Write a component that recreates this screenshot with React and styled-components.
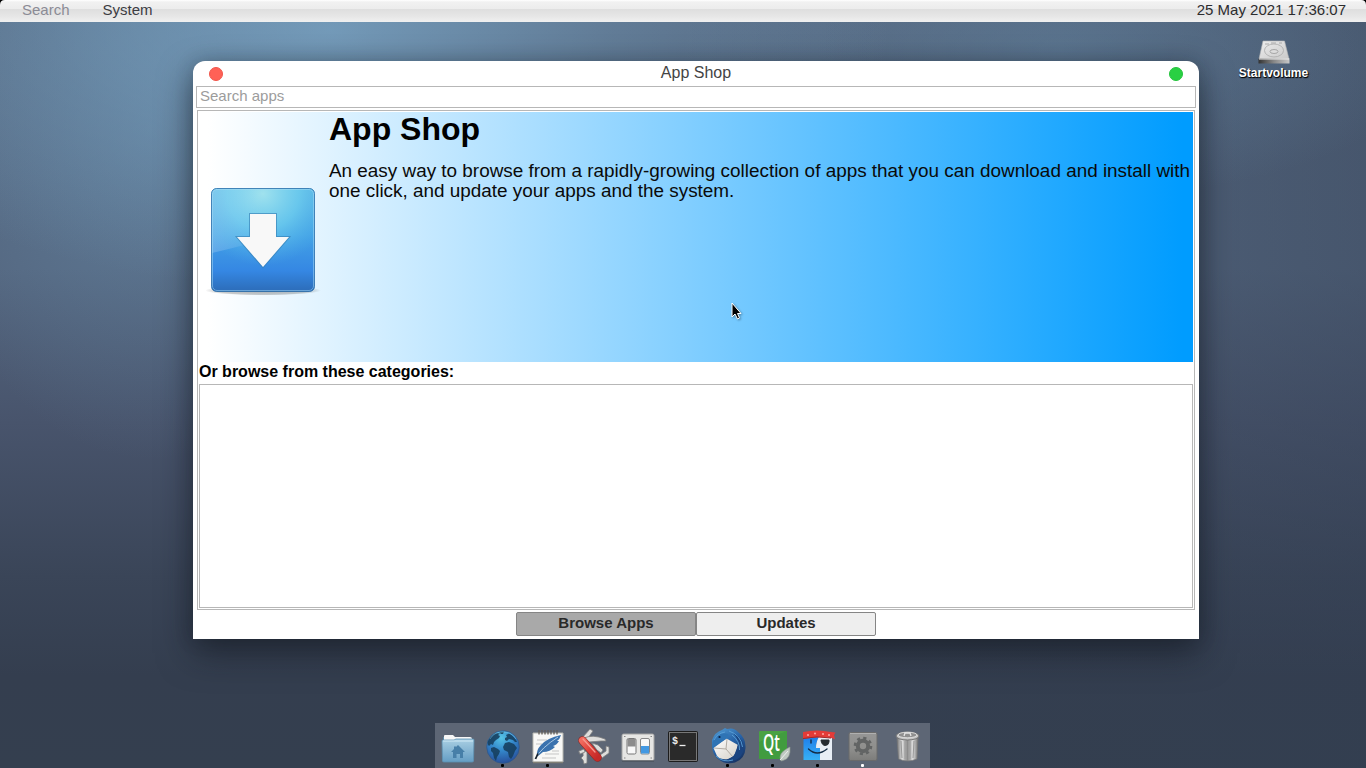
import React from 'react';
import styled, { createGlobalStyle } from 'styled-components';

const Global = createGlobalStyle`
  * { box-sizing: border-box; }
  body { margin: 0; background: #000; font-family: "Liberation Sans", Arial, sans-serif; overflow: hidden; }
  h1, h2, p { margin: 0; }
`;

const Desktop = styled.div`
  position: relative;
  width: 1366px;
  height: 768px;
  display: flex;
  flex-direction: column;
  align-items: stretch;
  overflow: hidden;
  background:
    radial-gradient(ellipse 560px 260px at 330px 30px, rgba(126,172,205,.72), rgba(126,172,205,.3) 50%, rgba(126,172,205,0) 100%),
    radial-gradient(ellipse 230px 330px at 150px 130px, rgba(108,150,182,.42), rgba(108,150,182,0) 100%),
    radial-gradient(ellipse 380px 150px at 1060px 50px, rgba(104,140,170,.45), rgba(104,140,170,0) 100%),
    linear-gradient(90deg, rgba(50,62,82,0) 60%, rgba(50,62,82,.4) 100%),
    linear-gradient(180deg, #55677f 0%, #54667f 35%, #48546c 55%, #3a4558 75%, #343e4f 88%, #343f4f 100%);
`;

const MenuBar = styled.header`
  height: 22px;
  flex: none;
  display: flex;
  align-items: center;
  gap: 33px;
  padding: 0 20px 2px 22px;
  font-size: 15px;
  line-height: 20px;
  color: #3c3c40;
  background: linear-gradient(180deg, #fff 0, #f1f1f1 2px, #ececec 9px, #dedede 9px, #e6e6e6 16px, #f0f0f0 22px);
`;
const MenuItem = styled.span`
  color: ${p => (p.$muted ? '#8b8b95' : '#3c3c42')};
`;
const Clock = styled.time`
  margin-left: auto;
  color: #2c2c2e;
`;
const ScreenCorner = styled.svg`
  position: absolute;
  top: 0;
  ${p => (p.$right ? 'right: 0; transform: scaleX(-1);' : 'left: 0;')}
`;

const Stage = styled.main`
  flex: 1;
  display: flex;
  align-items: flex-start;
  padding-left: 193px;
`;
const Window = styled.section`
  width: 1006px;
  height: 578px;
  margin-top: 39px;
  display: flex;
  flex-direction: column;
  background: #fff;
  border-radius: 12px 12px 0 0;
  box-shadow: 0 14px 34px rgba(14,18,26,.55), 0 0 18px rgba(20,30,40,.22);
`;
const TitleBar = styled.div`
  height: 25px;
  flex: none;
  display: flex;
  align-items: center;
  justify-content: space-between;
  padding: 0 16px;
  font-size: 16px;
  color: #444;
`;
const Title = styled.span`
  line-height: 18px;
  margin-top: -2px;
`;
const Light = styled.span`
  width: 14px;
  height: 14px;
  margin-top: 1px;
  border-radius: 50%;
  background: ${p => p.$color};
  border: 1px solid ${p => p.$edge};
`;
const SearchField = styled.input`
  flex: none;
  height: 22px;
  margin: 0 3px;
  padding: 0 3px 3px;
  border: 1px solid #b7b7b7;
  border-radius: 0;
  background: #fff;
  font: 15px "Liberation Sans", Arial, sans-serif;
  &::placeholder { color: #9c9c9c; opacity: 1; }
`;
const Panel = styled.div`
  flex: none;
  height: 500px;
  margin: 2px 4px 0;
  padding: 1px 1px 1px;
  border: 1px solid #b7b7b7;
  display: flex;
  flex-direction: column;
`;
const Banner = styled.div`
  height: 250px;
  flex: none;
  margin: 0 0 0 -1px;
  display: flex;
  align-items: flex-start;
  background: linear-gradient(90deg, #fff 0, #fff 1%, #009cff 99%);
  color: #0a0a0a;
`;
const BannerIcon = styled.div`
  width: 131px;
  flex: none;
  padding: 74px 0 0 8px;
  svg { display: block; }
`;
const BannerText = styled.div`
  flex: 1;
  white-space: nowrap;
`;
const BannerTitle = styled.h1`
  font-size: 32px;
  line-height: 34px;
  color: #000;
`;
const BannerCopy = styled.p`
  margin-top: 15px;
  font-size: 18.9px;
  line-height: 20px;
`;
const SectionTitle = styled.h2`
  height: 22px;
  font-size: 16px;
  line-height: 19px;
  color: #000;
`;
const CategoryList = styled.div`
  flex: 1;
  border: 1px solid #b7b7b7;
  background: #fff;
`;
const Tabs = styled.nav`
  display: flex;
  justify-content: center;
  padding-top: 2px;
`;
const Tab = styled.button`
  width: 180px;
  height: 24px;
  padding: 0 0 3px;
  border: 1px solid #858585;
  border-radius: 2px;
  background: ${p => (p.$active ? '#a9a9a9' : '#eee')};
  color: #292929;
  font: bold 15px "Liberation Sans", Arial, sans-serif;
`;

const Shelf = styled.aside`
  flex: 1;
  padding: 17px 18px 0 0;
  display: flex;
  flex-direction: column;
  align-items: center;
`;
const VolumeName = styled.span`
  font-size: 12px;
  font-weight: bold;
  line-height: 14px;
  margin-top: 1px;
  color: #fff;
  text-shadow: 1px 1px 1px #000, 0 1px 1px rgba(0,0,0,.6);
`;

const Dock = styled.footer`
  flex: none;
  align-self: flex-start;
  width: 495px;
  height: 45px;
  margin-left: 435px;
  display: flex;
  background: #5d6675;
`;
const DockItem = styled.div`
  position: relative;
  width: 45px;
  height: 45px;
  display: flex;
  justify-content: center;
  padding: 7px 1px 0 2px;
  svg { flex: none; overflow: visible; }
`;
const RunningDot = styled.i`
  position: absolute;
  left: 21px;
  bottom: 1px;
  width: 3px;
  height: 3px;
  border-radius: 1px;
  background: ${p => p.$color};
`;
const Pointer = styled.svg`
  position: absolute;
  left: 729px;
  top: 301px;
  filter: drop-shadow(1px 1px 1px rgba(0,0,0,.35));
`;

const DownloadIcon = () => (
  <svg width="116" height="112" viewBox="0 0 116 112">
    <defs>
      <linearGradient id="dl" x1="0" y1="0" x2="0" y2="1">
        <stop offset="0" stopColor="#5cb5e4" /><stop offset=".45" stopColor="#43a2e6" />
        <stop offset=".8" stopColor="#3587e3" /><stop offset="1" stopColor="#2c6cb8" />
      </linearGradient>
      <radialGradient id="dlGlow" cx=".5" cy=".05" r=".7">
        <stop offset="0" stopColor="#a0e2ee" /><stop offset=".5" stopColor="#6fcfef" stopOpacity=".75" />
        <stop offset="1" stopColor="#4fb2ea" stopOpacity="0" />
      </radialGradient>
      <radialGradient id="dlShade"><stop offset="0" stopColor="#000" stopOpacity=".3" /><stop offset=".8" stopColor="#000" stopOpacity=".2" /><stop offset="1" stopColor="#000" stopOpacity="0" /></radialGradient>
      <linearGradient id="dlGloss" x1="0" y1="0" x2="1" y2="0"><stop offset="0" stopColor="#fff" stopOpacity=".2" /><stop offset=".5" stopColor="#fff" stopOpacity="0" /></linearGradient>
    </defs>
    <ellipse cx="57" cy="104.500" rx="58" ry="5" fill="url(#dlShade)" />
    <rect x="5.500" y="2.500" width="103" height="103" rx="5" fill="url(#dl)" />
    <rect x="5.500" y="2.500" width="103" height="103" rx="5" fill="url(#dlGlow)" />
    <path d="M6 7Q6 3 10 3H104Q108 3 108 7V38Q60 54 6 67Z" fill="url(#dlGloss)" />
    <rect x="6.500" y="3.500" width="101" height="101" rx="4.500" fill="none" stroke="#a8dcf5" strokeOpacity=".5" />
    <rect x="5.500" y="2.500" width="103" height="103" rx="5" fill="none" stroke="#2468a5" strokeOpacity=".75" />
    <path d="M44 28H70V51H83L57 81L31 51H44Z" fill="#f8f8f8" stroke="#3580b5" strokeOpacity=".65" strokeWidth="2" paintOrder="stroke" />
  </svg>
);

const DriveIcon = () => (
  <svg width="34" height="26" viewBox="0 0 34 26">
    <defs>
      <linearGradient id="hd" x1="0" y1="0" x2="1" y2="1"><stop offset="0" stopColor="#eee" /><stop offset="1" stopColor="#c9c9c9" /></linearGradient>
      <linearGradient id="hdFront"><stop offset="0" stopColor="#333" /><stop offset=".5" stopColor="#888" /><stop offset="1" stopColor="#c8c8c8" /></linearGradient>
    </defs>
    <path d="M6 2H27.500L32 20H2Z" fill="url(#hd)" stroke="#b5b5b5" strokeWidth=".6" />
    <path d="M1.500 19.500H32.500V24.500H1.500Z" fill="url(#hdFront)" />
    <path d="M2 20H32" stroke="#eee" />
    <ellipse cx="17" cy="11.500" rx="9.500" ry="6.500" fill="none" stroke="#aaa" strokeWidth=".8" />
    <ellipse cx="17" cy="12.500" rx="4" ry="2" fill="#ddd" stroke="#999" strokeWidth=".8" />
    <path d="M8 5H12M14 4H19M22 4H25" stroke="#aaa" />
  </svg>
);

const Folder = () => (
  <svg width="34" height="36" viewBox="0 0 34 36">
    <defs><linearGradient id="fo" x1="0" y1="0" x2="0" y2="1"><stop offset="0" stopColor="#a9cfe3" /><stop offset="1" stopColor="#649dc4" /></linearGradient></defs>
    <path d="M2 7H12L14 9H31V18H2Z" fill="#5d8aa6" />
    <path d="M3 6Q3 5 4 5H12L14 7H29Q31 7 31 9V13H3Z" fill="#f7f7f7" />
    <path d="M1 11Q1 10 2 10H13L15 9H32Q33 9 33 10L32.500 31Q32.500 32 31 32H3Q1.500 32 1.500 31Z" fill="url(#fo)" stroke="#5c92b4" strokeWidth=".8" />
    <path d="M2 11H32" stroke="#d0e9f5" />
    <path d="M17 15L24 22H22V28H19V24H15.500V28H12V22H10L13 19V16.500H15V17Z" fill="#477fa8" />
  </svg>
);
const Globe = () => (
  <svg width="36" height="36" viewBox="0 0 36 36">
    <defs><radialGradient id="gl" cx=".45" cy=".22" r=".75"><stop offset="0" stopColor="#56c4e6" /><stop offset=".5" stopColor="#3489cc" /><stop offset="1" stopColor="#28549f" /></radialGradient></defs>
    <circle cx="18" cy="17" r="16.300" fill="url(#gl)" stroke="#2b568a" strokeWidth=".7" />
    <path d="M3 11Q6 5 12 3L15 3.500L13 5L15 6L14 8L11 10L9 12L8 15L6 14L4 16Q2 14 3 11ZM6 18L9 17L13 19L15 21L14 24L12 27L11 31L9 28L8 23L6 21ZM21 5L24 3.500Q30 7 32 12L30 12L28 10L24 9L22 11L20 10L20 8L22 7ZM20 13L24 12L29 14L32 18L30 21L28 26L26 29L24 27L23 22L19 20L18 17ZM14 2L19 1.500L18 4L16 4Z" fill="#163d5c" fillOpacity=".88" />
    <path d="M5 9Q9 2 18 2Q27 2 31 9" fill="none" stroke="#9be0f2" strokeOpacity=".35" />
  </svg>
);
const Notes = () => (
  <svg width="36" height="36" viewBox="0 0 36 36">
    <path d="M3 3H33V32H3Z" fill="#f8f8f6" stroke="#b7b7b1" />
    <path d="M3 32.500H33" stroke="#807f76" strokeWidth="1.500" />
    <path d="M9 0V4.500M12 0V4.500M15 0V4.500M18 0V4.500M21 0V4.500M24 0V4.500M27 0V4.500" stroke="#5f5b57" strokeWidth="1.300" />
    <path d="M7 10H17M6 14H12M22 21H29M15 24H29M12 28H26" stroke="#c5c5c5" />
    <path d="M7 26Q6 20 11 15Q17 8 31 5Q30 9 27 11L29 11Q27 15 23 16L25 17Q20 22 13 22L8 26Z" fill="#3a72ae" />
    <path d="M5 29Q11 18 28 7" stroke="#a8c7e2" strokeWidth="1" fill="none" />
    <path d="M5.500 29L8 23.500" stroke="#17212c" strokeWidth="1.800" />
  </svg>
);
const Knife = () => (
  <svg width="36" height="36" viewBox="0 0 36 36" fill="none" strokeLinecap="round" strokeLinejoin="round">
    <defs><linearGradient id="kn" x1="0" y1="0" x2="1" y2="1"><stop offset="0" stopColor="#f06a5e" /><stop offset=".5" stopColor="#de3f38" /><stop offset="1" stopColor="#c42a28" /></linearGradient></defs>
    <g fill="#dededc" stroke="#7d7d7d" strokeWidth=".8">
      <path d="M7 8L15 -1L18 1L13 8L10 12Z" />
      <path d="M9 8Q18 4 30 9L31 11L26 11L14 12Z" />
      <path d="M8 20L12 22L12 33L9 34L8 30L6 28L8 26Z" />
      <path d="M4 21L9 19L10 22L5 24Z" />
      <path d="M17 13L23 15L28 20L26 23L22 20Z" />
      <path d="M25 25L31 21L31 16L34 17L34 23L27 28Z" />
    </g>
    <path d="M7.500 10.500L22.500 27.500" stroke="#912520" strokeWidth="8.500" />
    <path d="M7.500 10.500L22.500 27.500" stroke="url(#kn)" strokeWidth="7.200" />
    <path d="M8 9L20 22" stroke="#f69a90" strokeWidth="1.300" />
  </svg>
);
const Switches = () => (
  <svg width="36" height="36" viewBox="0 0 36 36">
    <rect x="2" y="4" width="32" height="26.500" rx="1.500" fill="#e6e6e4" stroke="#a5a5a5" />
    <path d="M2 31H34" stroke="#454a52" />
    <rect x="7" y="8.500" width="9" height="15.500" rx="1.500" fill="#f8f8f8" stroke="#777" />
    <rect x="7.500" y="9" width="8" height="7.500" fill="#8c8c8c" />
    <rect x="20.500" y="8.500" width="9" height="15.500" rx="1.500" fill="#f8f8f8" stroke="#888" />
    <rect x="21" y="16" width="8" height="7.500" fill="#4298e2" />
    <path d="M4 6.500h1.500M30.500 6.500h1.500M4 28h1.500M30.500 28h1.500" stroke="#888" />
  </svg>
);
const PromptText = styled.text`
  font: bold 10px "Liberation Mono", monospace;
  fill: #eee;
`;
const Terminal = () => (
  <svg width="36" height="36" viewBox="0 0 36 36">
    <rect x="3.500" y="1.500" width="29" height="30" rx="1" fill="#2a2a2a" stroke="#1c1c1c" />
    <rect x="4.500" y="2.500" width="27" height="28" fill="none" stroke="#777" />
    <PromptText x="7" y="13.500">$</PromptText>
    <path d="M14.500 15.500H20.500" stroke="#eee" strokeWidth="1.300" />
  </svg>
);
const Mail = () => (
  <svg width="38" height="36" viewBox="0 0 38 36">
    <defs>
      <linearGradient id="ml" x1=".2" y1="0" x2=".8" y2="1"><stop offset="0" stopColor="#4d96cf" /><stop offset=".45" stopColor="#2763a8" /><stop offset="1" stopColor="#15305f" /></linearGradient>
      <linearGradient id="en" x1="0" y1="0" x2="1" y2="1"><stop offset="0" stopColor="#fff" /><stop offset="1" stopColor="#d5d0c8" /></linearGradient>
    </defs>
    <path d="M3 10Q6 2 13 0L16 -2L18 -1Q25 -3 29 2Q37 8 36.500 18Q36 29 26 32.500Q16 35 9 29Q4 25 3 17Z" fill="url(#ml)" />
    <path d="M4.500 18L17.500 8.500L29 15L25 26L19 29Q12 30 8 26Z" fill="url(#en)" />
    <path d="M5 18L17 19L18 9M17 19L24 27" fill="none" stroke="#aaa49b" strokeWidth=".9" />
    <path d="M4 18Q2 11 8 6Q13 2 19 4Q21 7 17 9L9 14Z" fill="#2f74b5" />
    <path d="M24 3Q31 9 28 19Q26 27 18 30Q30 33 34 22Q37 9 24 3Z" fill="#1b4480" />
    <path d="M20 1Q32 5 33.500 17M23 5Q31 11 30.500 20M5 10Q9 3 16 2M7 26Q14 33 24 30" fill="none" stroke="#5ba1d8" strokeWidth=".9" />
    <circle cx="10.500" cy="7" r="1.100" fill="#0d2140" />
  </svg>
);
const QtText = styled.text`
  font-family: "Open Sans", sans-serif;
  font-size: 17px;
  font-weight: 600;
  fill: #fff;
`;
const Qt = () => (
  <svg width="36" height="36" viewBox="0 0 36 36">
    <path d="M4 2Q4 1 5 1H32V25L26 29H5Q4 29 4 28Z" fill="#4aa244" />
    <path d="M4 29V12L32 1V25L26 29Z" fill="#37963a" opacity=".5" />
    <g transform="translate(8 21) scale(.84 1.38)"><QtText x="0" y="0">Qt</QtText></g>
    <path d="M26 31Q22 23 35 17Q36 29 28 30.500Z" fill="#bfc8c2" stroke="#8e9b91" strokeWidth=".6" />
    <path d="M25 30L33 21" stroke="#eef2ee" />
  </svg>
);
const Pirate = () => (
  <svg width="36" height="36" viewBox="0 0 36 36">
    <defs><linearGradient id="pi" x1="0" y1="0" x2="0" y2="1"><stop offset="0" stopColor="#1c78e8" /><stop offset="1" stopColor="#37b1f5" /></linearGradient></defs>
    <path d="M3.500 4H21Q16 11 16 18H20V30H3.500Z" fill="url(#pi)" />
    <path d="M20 5H32V30H20V18H16Q16 11 20 5Z" fill="#e8eef5" />
    <path d="M3 2Q17 -1 31 2L35.500 2.500L34 5L35 9L31 8Q17 6 3 9Z" fill="#e33b38" />
    <path d="M3 8.500Q17 5.500 31 8" stroke="#9f2828" fill="none" />
    <g fill="#ffaaa4"><circle cx="8" cy="5" r="1" /><circle cx="15" cy="3.500" r="1" /><circle cx="23" cy="4" r="1" /><circle cx="29" cy="5" r="1" /></g>
    <path d="M21 10H29V12Q28.500 15.500 25 15.500Q21.500 15 21 10Z" fill="#252b30" stroke="#252b30" />
    <path d="M11 10V13M8.500 19Q17 27 27 19" fill="none" stroke="#142c45" strokeWidth="1.400" strokeLinecap="round" />
  </svg>
);
const Gear = () => (
  <svg width="36" height="36" viewBox="0 0 36 36">
    <defs><linearGradient id="gr" x1="0" y1="0" x2="0" y2="1"><stop offset="0" stopColor="#969696" /><stop offset=".6" stopColor="#8e8e8c" /><stop offset="1" stopColor="#7c7c7a" /></linearGradient></defs>
    <rect x="4" y="2.500" width="28" height="28" rx="1.500" fill="url(#gr)" stroke="#6a6a6a" />
    <path d="M5 3.500H31" stroke="#b0b0b0" />
    <circle cx="18" cy="16" r="8" fill="none" stroke="#626464" strokeWidth="2.600" strokeDasharray="3.140 3.140" />
    <circle cx="18" cy="16" r="5.200" fill="none" stroke="#626464" strokeWidth="4" />
  </svg>
);
const Trash = () => (
  <svg width="36" height="36" viewBox="0 0 36 36">
    <defs><linearGradient id="tr"><stop offset="0" stopColor="#777" /><stop offset=".25" stopColor="#ddd" /><stop offset=".5" stopColor="#8c8c8c" /><stop offset=".75" stopColor="#ddd" /><stop offset="1" stopColor="#777" /></linearGradient></defs>
    <path d="M7 8H28L27 29Q17.500 33 8.500 29Z" fill="url(#tr)" stroke="#777" strokeWidth=".7" />
    <path d="M11 11L12 28M15 11V29.500M20 11V29.500M24 11L23 28" stroke="#989898" />
    <ellipse cx="17.500" cy="6" rx="11.500" ry="4" fill="#c4c4c4" stroke="#747474" />
    <ellipse cx="17.500" cy="5" rx="9.500" ry="2.800" fill="#8f8f8f" stroke="#e2e2e2" strokeWidth=".9" />
    <path d="M14 6L15 3H20L21 6" fill="none" stroke="#e5e5e5" strokeWidth="1.300" />
  </svg>
);

const dockItems = [
  { id: 'home', Icon: Folder },
  { id: 'web', Icon: Globe, dot: '#000' },
  { id: 'notes', Icon: Notes, dot: '#000' },
  { id: 'tools', Icon: Knife },
  { id: 'settings', Icon: Switches },
  { id: 'terminal', Icon: Terminal },
  { id: 'mail', Icon: Mail, dot: '#000' },
  { id: 'qt', Icon: Qt, dot: '#000' },
  { id: 'files', Icon: Pirate, dot: '#000' },
  { id: 'app', Icon: Gear, dot: '#fff' },
  { id: 'trash', Icon: Trash },
];

export default function App() {
  return (
    <Desktop>
      <Global />
      <MenuBar>
        <MenuItem $muted>Search</MenuItem>
        <MenuItem>System</MenuItem>
        <Clock>25 May 2021 17:36:07</Clock>
      </MenuBar>
      <Stage>
        <Window>
          <TitleBar>
            <Light $color="#ff6156" $edge="#f0564b" />
            <Title>App Shop</Title>
            <Light $color="#29d043" $edge="#24c43c" />
          </TitleBar>
          <SearchField placeholder="Search apps" />
          <Panel>
            <Banner>
              <BannerIcon><DownloadIcon /></BannerIcon>
              <BannerText>
                <BannerTitle>App Shop</BannerTitle>
                <BannerCopy>
                  An easy way to browse from a rapidly-growing collection of apps that you can download and install with<br />
                  one click, and update your apps and the system.
                </BannerCopy>
              </BannerText>
            </Banner>
            <SectionTitle>Or browse from these categories:</SectionTitle>
            <CategoryList />
          </Panel>
          <Tabs>
            <Tab $active>Browse Apps</Tab>
            <Tab>Updates</Tab>
          </Tabs>
        </Window>
        <Shelf>
          <DriveIcon />
          <VolumeName>Startvolume</VolumeName>
        </Shelf>
      </Stage>
      <Dock>
        {dockItems.map(({ id, Icon, dot }) => (
          <DockItem key={id}>
            <Icon />
            {dot && <RunningDot $color={dot} />}
          </DockItem>
        ))}
      </Dock>
      <ScreenCorner width="5" height="5"><path d="M0 0H5Q0 0 0 5Z" /></ScreenCorner>
      <ScreenCorner $right width="5" height="5"><path d="M0 0H5Q0 0 0 5Z" /></ScreenCorner>
      <Pointer width="14" height="20" viewBox="0 0 14 20">
        <path d="M3 2V16L6 13L8.500 18L10.500 17L8.500 12.500H12Z" fill="#000" stroke="#fff" strokeWidth="1" />
      </Pointer>
    </Desktop>
  );
}
